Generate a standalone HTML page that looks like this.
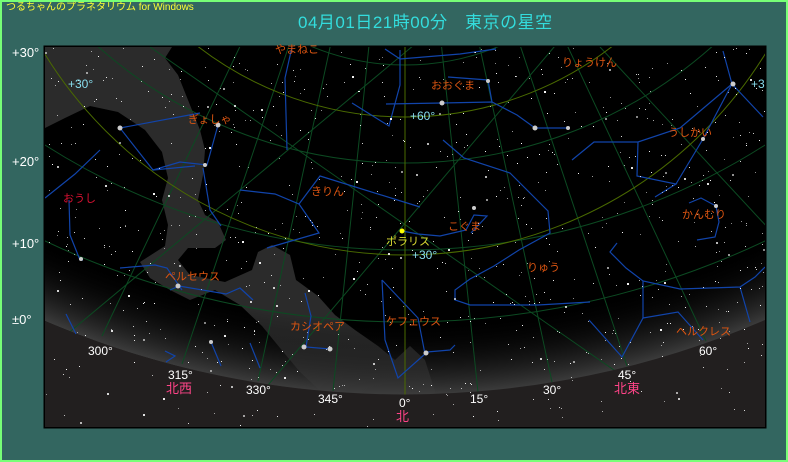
<!DOCTYPE html>
<html><head><meta charset="utf-8">
<style>
html,body{margin:0;padding:0;}
body{width:788px;height:462px;overflow:hidden;background:#336660;position:relative;font-family:"Liberation Sans","Noto Sans CJK JP",sans-serif;}
#frame{position:absolute;left:0;top:0;width:784px;height:458px;border:2px solid #77ff77;background:#336660;}
.t{position:absolute;white-space:nowrap;line-height:1;}
svg{position:absolute;left:0;top:0;}
</style></head><body>
<div id="frame"></div>
<svg width="788" height="462" viewBox="0 0 788 462" xmlns="http://www.w3.org/2000/svg">
<defs>
<clipPath id="c"><rect x="45" y="47" width="720" height="380"/></clipPath>
<radialGradient id="glow" gradientUnits="userSpaceOnUse" cx="405" cy="-518" r="913">
<stop offset="0.92" stop-color="#000" stop-opacity="0"/>
<stop offset="1" stop-color="#3c3c3c" stop-opacity="1"/>
</radialGradient>
</defs>
<rect x="44" y="46" width="722" height="382" fill="#000" stroke="#000"/>
<g clip-path="url(#c)">
<path fill="#2b2b2b" d="M45,47 L172,47 L165,58 L178,75 L188,100 L200,130 L205,150 L203,175 L198,200 L205,215 L218,222 L226,240 L215,248 L188,248 L178,260 L190,275 L225,282 L252,270 L258,252 L272,245 L290,255 L296,280 L318,296 L335,315 L355,330 L378,346 L395,360 L410,346 L425,360 L432,382 L438,400 L330,400 L300,372 L280,348 L262,326 L240,305 L215,290 L190,300 L170,290 L150,278 L140,262 L165,246 L168,225 L162,200 L168,178 L162,152 L145,130 L118,112 L90,106 L65,118 L45,128 Z"/>
<circle cx="405" cy="-518" r="913" fill="url(#glow)"/>
<g fill="none" stroke="#0c4a22" stroke-width="1">
<circle cx="405" cy="-518" r="840"/>
<circle cx="405" cy="-420" r="670"/>
<circle cx="405" cy="-300" r="463"/>
<circle cx="405" cy="-180" r="245"/>
<path d="M102,336 L405,-300 M182,364 L405,-300 M258,381 L405,-300 M333,391 L405,-300 M478,392 L405,-300 M552,382 L405,-300 M627,366 L405,-300 M706,341 L405,-300"/>
<path d="M60,340 L420,40 M230,430 L560,40 M150,47 L700,430 M600,47 L770,230"/>
</g>
<g fill="none" stroke="#4a6a00" stroke-width="1">
<circle cx="405" cy="-168" r="423"/>
<circle cx="405" cy="-222" r="339"/>
<line x1="405" y1="47" x2="405" y2="395"/>
</g>
<path fill="#221f1f" d="M45,321 A913,913 0 0 0 765,320 L765,427 L45,427 Z"/>
<g fill="none" stroke="#1144aa" stroke-width="1.2">
<polyline points="352,103 389,126 400,85 400,50"/>
<polyline points="386,104 442,103 492,102 517,115 535,128 568,128"/>
<polyline points="448,77 488,80 492,102"/>
<polyline points="385,49 400,59 460,54 496,49"/>
<polyline points="240,190 275,194 299,204 320,176 420,207"/>
<polyline points="299,204 319,233 267,248"/>
<polyline points="402,231 418,234 440,236 466,230 474,215 487,216 471,233"/>
<polyline points="443,140 464,158 510,173 548,211 550,233 519,250 494,266 470,279 455,290 455,300 470,305 538,305 590,302"/>
<polyline points="218,125 207,165 180,162 153,170 120,128"/>
<polyline points="120,128 200,113"/>
<polyline points="292,47 285,78 287,150"/>
<polyline points="723,51 732,84 763,117"/>
<polyline points="732,84 680,128 638,142 594,142 572,160"/>
<polyline points="638,142 637,176 676,184 655,197"/>
<polyline points="732,84 703,139 676,184"/>
<polyline points="689,203 701,198 716,206 719,222 715,237 697,240"/>
<polyline points="617,243 610,252 626,268 643,281 680,289 740,287 755,277 765,267"/>
<polyline points="643,281 643,318 678,312 703,340"/>
<polyline points="740,287 750,322"/>
<polyline points="643,318 622,357 589,320"/>
<polyline points="66,314 76,334"/>
<polyline points="165,351 175,356 166,362"/>
<polyline points="211,342 221,366"/>
<polyline points="250,343 260,368"/>
<polyline points="170,290 179,286 226,294 240,288 253,300"/>
<polyline points="305,293 311,316 306,347 330,349"/>
<polyline points="382,280 385,340 398,378 425,354 418,318 382,280"/>
<polyline points="427,352 450,350 455,345"/>
<polyline points="69,200 70,235 80,260 83,260"/>
<polyline points="45,198 75,174 100,150"/>
<polyline points="153,170 195,166"/>
<polyline points="120,268 155,265 167,268 182,290"/>
<polyline points="203,168 210,210 221,226"/>
</g>
<g id="stars" fill="#fff"></g>
<g fill="#ccc">
<circle cx="120" cy="128" r="2.5"/><circle cx="205" cy="165" r="2"/><circle cx="218" cy="125" r="2.5"/>
<circle cx="442" cy="103" r="2.5"/><circle cx="488" cy="81" r="2"/><circle cx="535" cy="128" r="2.5"/>
<circle cx="568" cy="128" r="2"/><circle cx="474" cy="208" r="2"/><circle cx="733" cy="84" r="2.5"/>
<circle cx="703" cy="139" r="2"/><circle cx="716" cy="206" r="2"/><circle cx="178" cy="286" r="2.5"/>
<circle cx="304" cy="347" r="2.5"/><circle cx="330" cy="349" r="2.5"/><circle cx="426" cy="353" r="2.5"/>
<circle cx="211" cy="342" r="2"/><circle cx="81" cy="259" r="2"/>
</g>
<circle cx="402" cy="231" r="2.5" fill="#ffff00"/>
</g>
</svg>
<script>
(function(){var s=12345;function r(){s=(s*1103515245+12345)%2147483648;return s/2147483648;}
var g=document.getElementById('stars'),h='';
for(var i=0;i<900;i++){var x=45+r()*720,y=47+r()*380;var d=Math.sqrt((x-405)*(x-405)+(y+518)*(y+518));if(d>913&&r()<0.6)continue;var w=r()<0.1?2:1;h+='<rect x="'+x.toFixed(0)+'" y="'+y.toFixed(0)+'" width="'+w+'" height="'+w+'" fill-opacity="'+(0.5+r()*0.5).toFixed(2)+'"/>';}
g.innerHTML=h;})();
</script>
<div class="t" style="left:6px;top:3px;font-size:10px;color:#ffff33;">つるちゃんのプラネタリウム for Windows</div>
<div class="t" style="left:298px;top:14px;font-size:17px;color:#33dddd;letter-spacing:0.5px;">04月01日21時00分　東京の星空</div>
<div class="t" style="left:12px;top:46px;font-size:13px;color:#fff;">+30°</div>
<div class="t" style="left:12px;top:155px;font-size:13px;color:#fff;">+20°</div>
<div class="t" style="left:12px;top:237px;font-size:13px;color:#fff;">+10°</div>
<div class="t" style="left:12px;top:313px;font-size:13px;color:#fff;">±0°</div>
<div class="t" style="left:68px;top:78px;font-size:12px;color:#88ddee;">+30°</div>
<div class="t" style="left:410px;top:110px;font-size:12px;color:#88ddee;">+60°</div>
<div class="t" style="left:412px;top:249px;font-size:12px;color:#88ddee;">+30°</div>
<div class="t" style="left:751px;top:78px;font-size:12px;color:#88ddee;">+3</div>
<div class="t" style="left:275px;top:45px;font-size:11px;color:#dd5511;">やまねこ</div>
<div class="t" style="left:562px;top:58px;font-size:11px;color:#dd5511;">りょうけん</div>
<div class="t" style="left:431px;top:81px;font-size:11px;color:#dd5511;">おおぐま</div>
<div class="t" style="left:188px;top:115px;font-size:11px;color:#dd5511;">ぎょしゃ</div>
<div class="t" style="left:668px;top:128px;font-size:11px;color:#dd5511;">うしかい</div>
<div class="t" style="left:311px;top:187px;font-size:11px;color:#dd5511;">きりん</div>
<div class="t" style="left:63px;top:194px;font-size:11px;color:#dd1133;">おうし</div>
<div class="t" style="left:682px;top:210px;font-size:11px;color:#dd5511;">かんむり</div>
<div class="t" style="left:448px;top:222px;font-size:11px;color:#dd5511;">こぐま</div>
<div class="t" style="left:386px;top:237px;font-size:11px;color:#dddd33;">ポラリス</div>
<div class="t" style="left:527px;top:263px;font-size:11px;color:#dd5511;">りゅう</div>
<div class="t" style="left:165px;top:272px;font-size:11px;color:#dd5511;">ペルセウス</div>
<div class="t" style="left:290px;top:322px;font-size:11px;color:#dd5511;">カシオペア</div>
<div class="t" style="left:386px;top:317px;font-size:11px;color:#dd5511;">ケフェウス</div>
<div class="t" style="left:676px;top:327px;font-size:11px;color:#dd5511;">ヘルクレス</div>
<div class="t" style="left:88px;top:345px;font-size:12px;color:#fff;">300°</div>
<div class="t" style="left:168px;top:369px;font-size:12px;color:#fff;">315°</div>
<div class="t" style="left:246px;top:384px;font-size:12px;color:#fff;">330°</div>
<div class="t" style="left:318px;top:393px;font-size:12px;color:#fff;">345°</div>
<div class="t" style="left:399px;top:397px;font-size:12px;color:#fff;">0°</div>
<div class="t" style="left:470px;top:393px;font-size:12px;color:#fff;">15°</div>
<div class="t" style="left:543px;top:384px;font-size:12px;color:#fff;">30°</div>
<div class="t" style="left:618px;top:369px;font-size:12px;color:#fff;">45°</div>
<div class="t" style="left:699px;top:345px;font-size:12px;color:#fff;">60°</div>
<div class="t" style="left:166px;top:382px;font-size:13px;color:#ff4488;">北西</div>
<div class="t" style="left:396px;top:410px;font-size:13px;color:#ff4488;">北</div>
<div class="t" style="left:614px;top:382px;font-size:13px;color:#ff4488;">北東</div>
</body></html>
